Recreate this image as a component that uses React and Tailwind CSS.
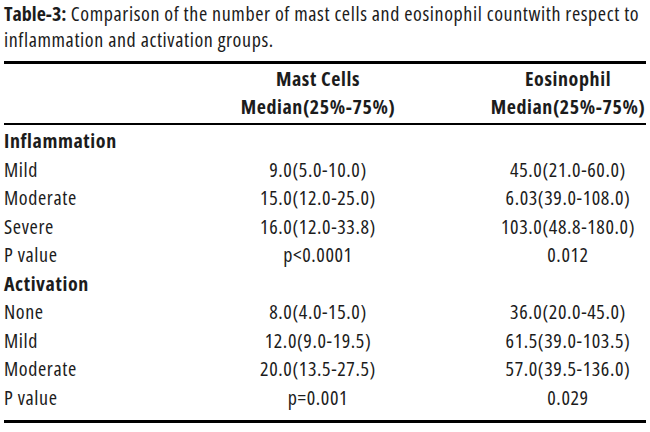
import React from 'react';

const groups = [
  {
    name: 'Inflammation',
    rows: [
      ['Mild', '9.0(5.0-10.0)', '45.0(21.0-60.0)'],
      ['Moderate', '15.0(12.0-25.0)', '6.03(39.0-108.0)'],
      ['Severe', '16.0(12.0-33.8)', '103.0(48.8-180.0)'],
      ['P value', 'p<0.0001', '0.012'],
    ],
  },
  {
    name: 'Activation',
    rows: [
      ['None', '8.0(4.0-15.0)', '36.0(20.0-45.0)'],
      ['Mild', '12.0(9.0-19.5)', '61.5(39.0-103.5)'],
      ['Moderate', '20.0(13.5-27.5)', '57.0(39.5-136.0)'],
      ['P value', 'p=0.001', '0.029'],
    ],
  },
];

const cols = 'grid grid-cols-[196px_236px_54px_1fr]';

export default function App() {
  return (
    <div className="w-[650px] h-[432px] bg-white px-[4px] text-[#1c1c1c] text-[20px] tracking-[0.6px] font-['Open_Sans',sans-serif] font-stretch-[87.5%]">
      <div className="pt-[1px] leading-[26px] whitespace-nowrap">
        <div>
          <span className="font-bold tracking-normal">Table-3:</span> Comparison of the number of mast cells and eosinophil countwith respect to
        </div>
        <div>inflammation and activation groups.</div>
      </div>

      <div className="mt-[8px] border-t-[3px] border-black">
        <div className={`${cols} pt-[1px] pb-[2px] border-b-[2px] border-black font-bold leading-[28px] whitespace-nowrap`}>
          <div />
          <div className="text-center">
            <div>Mast Cells</div>
            <div>Median(25%-75%)</div>
          </div>
          <div />
          <div className="text-center">
            <div>Eosinophil</div>
            <div>Median(25%-75%)</div>
          </div>
        </div>

        <div className="pt-[2px] pb-[8px] border-b-[3px] border-black">
          {groups.map(g => (
            <div key={g.name}>
              <div className="h-[28.5px] leading-[28px] font-bold">{g.name}</div>
              {g.rows.map(r => (
                <div key={r[0]} className={`${cols} h-[28.5px] leading-[28px] whitespace-nowrap`}>
                  <div>{r[0]}</div>
                  <div className="text-center">{r[1]}</div>
                  <div />
                  <div className="text-center">{r[2]}</div>
                </div>
              ))}
            </div>
          ))}
        </div>
      </div>
    </div>
  );
}
